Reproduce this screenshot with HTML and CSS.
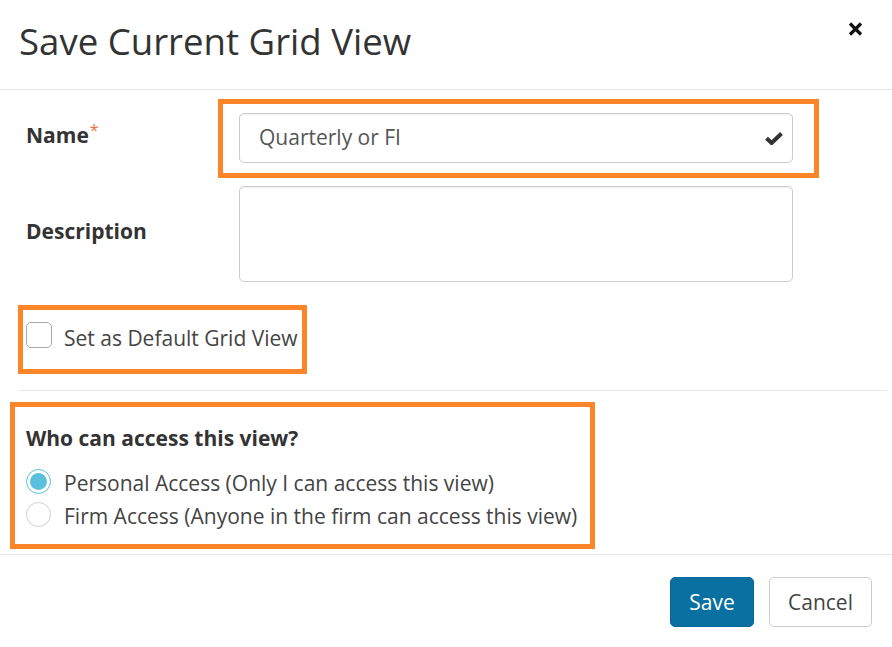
FILE: index.html
```html
<!DOCTYPE html>
<html>
<head>
<meta charset="utf-8">
<link rel="stylesheet" href="styles.css">
</head>
<body>
<div class="modal">
  <div class="modal-header">
    <h1 class="title">Save Current Grid View</h1>
    <button class="close" aria-label="Close">
      <svg width="15" height="14" viewBox="0 0 15 14"><path d="M2 1.5 L13 12.5 M13 1.5 L2 12.5" stroke="#111" stroke-width="3.2" stroke-linecap="butt"/></svg>
    </button>
  </div>
  <div class="modal-body">
    <div class="row row-name">
      <label class="field-label label-name">Name<span class="req">*</span></label>
      <div class="mark mark-name">
        <div class="input">
          <span class="input-text">Quarterly or FI</span>
          <svg class="check" width="18" height="13" viewBox="0 0 18 13"><path d="M1.5 6.2 L6.6 11 L16.5 1.5" fill="none" stroke="#333" stroke-width="4"/></svg>
        </div>
      </div>
    </div>
    <div class="row row-desc">
      <label class="field-label label-desc">Description</label>
      <div class="textarea"></div>
    </div>
    <div class="mark mark-default">
      <span class="checkbox"></span>
      <span class="check-label">Set as Default Grid View</span>
    </div>
    <div class="divider"></div>
    <div class="mark mark-access">
      <div class="access-title">Who can access this view?</div>
      <div class="radio-row">
        <span class="radio radio-on"><span class="dot"></span></span>
        <span class="radio-label">Personal Access (Only I can access this view)</span>
      </div>
      <div class="radio-row">
        <span class="radio"></span>
        <span class="radio-label">Firm Access (Anyone in the firm can access this view)</span>
      </div>
    </div>
  </div>
  <div class="modal-footer">
    <button class="btn btn-primary">Save</button>
    <button class="btn btn-default">Cancel</button>
  </div>
</div>
</body>
</html>
```

FILE: styles.css
```css
* { box-sizing: border-box; }
html, body {
  margin: 0;
  padding: 0;
  background: #fff;
}
body {
  font-family: "Open Sans", "Noto Sans", sans-serif;
  color: #333;
  font-size: 21px;
  line-height: 28px;
}
.modal {
  width: 892px;
  height: 647px;
  overflow: hidden;
}
.modal-header {
  height: 90px;
  border-bottom: 1px solid #e5e5e5;
  display: flex;
  justify-content: space-between;
  align-items: flex-start;
  padding: 17px 29px 0 19px;
}
.title {
  margin: 0;
  font-size: 36.6px;
  line-height: 49px;
  font-weight: 400;
  color: #333;
}
.close {
  border: 0;
  background: none;
  padding: 0;
  margin-top: 5px;
  width: 15px;
  height: 14px;
  display: block;
}
.close svg { display: block; }

.mark {
  border: 5px solid #fd8529;
}
.row {
  display: flex;
  align-items: flex-start;
}
.row-name {
  margin-top: 9px;
}
.field-label {
  font-weight: 700;
  color: #333;
  padding-left: 26px;
}
.label-name {
  width: 218px;
  margin-top: 22px;
}
.req {
  color: #f0703f;
  font-weight: 400;
  font-size: 16px;
  position: relative;
  top: -7px;
  margin-left: 1px;
}
.mark-name {
  width: 601px;
  height: 79px;
  padding: 9px 21px 10px 16px;
}
.input {
  height: 50px;
  border: 1px solid #cccccc;
  border-radius: 5px;
  display: flex;
  align-items: center;
  justify-content: space-between;
  padding: 0 9px 0 19px;
  box-shadow: inset 0 1px 1px rgba(0,0,0,0.06);
}
.input-text {
  color: #555;
  margin-top: -2px;
}
.check { display: block; margin-top: 1px; }

.row-desc {
  margin-top: 8px;
}
.label-desc {
  width: 239px;
  margin-top: 31px;
}
.textarea {
  width: 554px;
  height: 96px;
  border: 1px solid #cccccc;
  border-radius: 5px;
  box-shadow: inset 0 1px 1px rgba(0,0,0,0.06);
}

.mark-default {
  margin: 23px 0 0 18px;
  display: inline-flex;
  align-items: flex-start;
  height: 69px;
  padding: 12px 4px 0 3px;
}
.checkbox {
  width: 26px;
  height: 26px;
  border: 1px solid #aaaaaa;
  border-radius: 5px;
  background: #fff;
  flex: none;
}
.check-label {
  margin-left: 12px;
  margin-top: 2px;
  color: #444;
}
.divider {
  height: 1px;
  background: #e8e8e8;
  margin: 16px 5px 0 19px;
}
.mark-access {
  margin: 11px 0 0 10px;
  width: 585px;
  height: 147px;
  padding: 17px 0 0 11px;
}
.access-title {
  font-weight: 700;
  color: #333;
  margin-bottom: 17px;
}
.radio-row {
  display: flex;
  align-items: center;
  height: 28px;
  margin-bottom: 5px;
}
.radio {
  width: 25px;
  height: 25px;
  border-radius: 50%;
  border: 1px solid #cfcfcf;
  background: #fff;
  flex: none;
  display: flex;
  align-items: center;
  justify-content: center;
  margin-top: -4px;
}
.radio-on {
  border: 1.5px solid #5bc0de;
}
.dot {
  width: 17px;
  height: 17px;
  border-radius: 50%;
  background: #5bc0de;
}
.radio-label {
  margin-left: 13px;
  color: #444;
}

.modal-footer {
  margin-top: 5px;
  border-top: 1px solid #e5e5e5;
  display: flex;
  justify-content: flex-end;
  gap: 15px;
  padding: 22px 20px 0 0;
}
.btn {
  font-family: "Open Sans", "Noto Sans", sans-serif;
  font-size: 21px;
  height: 50px;
  border-radius: 5px;
  padding: 0;
  line-height: 28px;
}
.btn-primary {
  width: 84px;
  background: #0a6fa1;
  border: 1px solid #0a6698;
  color: #fff;
}
.btn-default {
  width: 103px;
  background: #fff;
  border: 1px solid #cccccc;
  color: #444;
}
```
